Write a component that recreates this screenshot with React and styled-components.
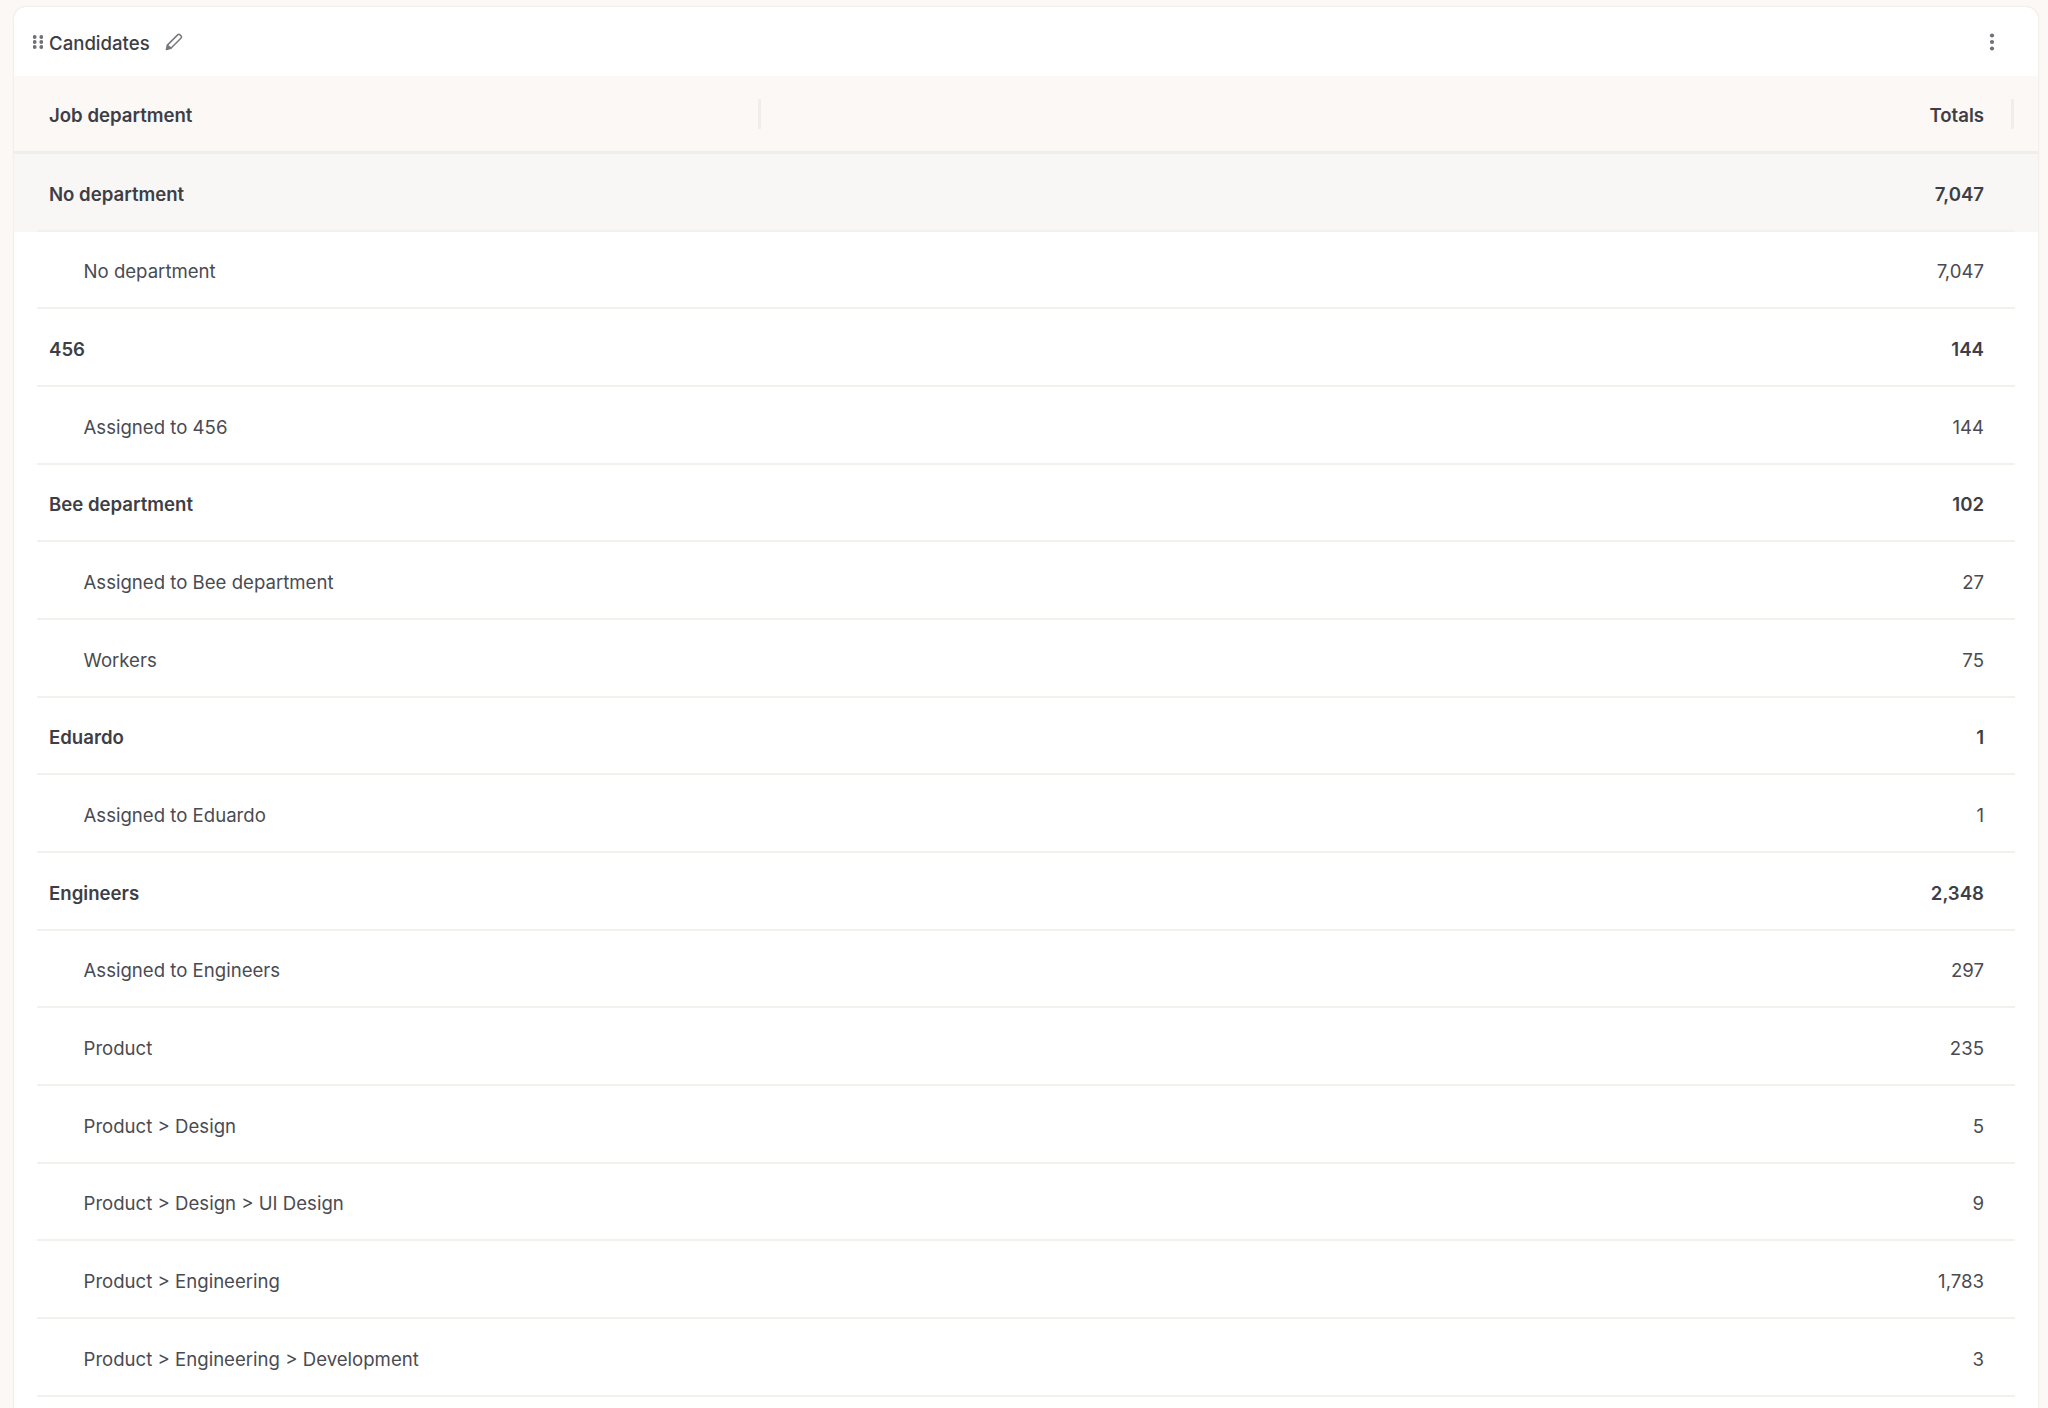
import React from 'react';
import styled, { createGlobalStyle } from 'styled-components';

const GlobalStyle = createGlobalStyle`
    html, body {
        margin: 0;
        height: 1408px;
        overflow: hidden;
        background: #fbf8f5;
    }
`;

const Page = styled.main`
    height: 1408px;
    padding: 7px 10px 0 14px;
    box-sizing: border-box;
    overflow: hidden;
    font-family: Inter, "Liberation Sans", sans-serif;
    font-size: 18.6px;
    color: #3d3e46;
`;

const Card = styled.section`
    background: #fff;
    border-radius: 12px 12px 0 0;
    height: 100%;
    overflow: hidden;
    box-shadow: 0 0 2px rgba(90, 70, 40, 0.18);
`;

const Toolbar = styled.header`
    display: flex;
    align-items: center;
    height: 69px;
    padding: 0 42px 0 19px;
`;

const Title = styled.h2`
    margin: 2px 15px 0 6px;
    font-size: inherit;
    font-weight: 500;
`;

const KebabButton = styled.button`
    display: flex;
    margin-left: auto;
    padding: 0;
    border: 0;
    background: none;
    color: #6f7076;
`;

const HeadRow = styled.div`
    display: grid;
    grid-template-columns: 712px 1fr 30px;
    align-items: center;
    height: 75px;
    padding: 0 24px 0 35px;
    background: #fbf8f5;
    border-bottom: 3px solid #f0eeea;
`;

const HeadCell = styled.div`
    display: flex;
    justify-content: ${(p) => (p.$right ? 'flex-end' : 'space-between')};
    align-items: center;
    font-weight: 560;
`;

const HeadLabel = styled.span`
    padding-top: 2px;
`;

const Divider = styled.span`
    width: 3px;
    height: 30px;
    background: #f1eeea;
`;

const Row = styled.div`
    padding: 0 23px;
    background: ${(p) => (p.$highlight ? '#f8f7f5' : 'transparent')};
`;

const RowInner = styled.div`
    display: flex;
    justify-content: space-between;
    align-items: center;
    box-sizing: border-box;
    height: 77.67px;
    padding: 4px 31px 0 ${(p) => (p.$child ? '46.5px' : '12px')};
    border-bottom: 2px solid #f2f1ec;
    font-weight: ${(p) => (p.$child ? 400 : 580)};
    color: ${(p) => (p.$child ? '#4a4b52' : '#3d3e46')};
`;

const rows = [
    ['No department', '7,047', false, true],
    ['No department', '7,047', true],
    ['456', '144'],
    ['Assigned to 456', '144', true],
    ['Bee department', '102'],
    ['Assigned to Bee department', '27', true],
    ['Workers', '75', true],
    ['Eduardo', '1'],
    ['Assigned to Eduardo', '1', true],
    ['Engineers', '2,348'],
    ['Assigned to Engineers', '297', true],
    ['Product', '235', true],
    ['Product > Design', '5', true],
    ['Product > Design > UI Design', '9', true],
    ['Product > Engineering', '1,783', true],
    ['Product > Engineering > Development', '3', true],
];

const DragIcon = () => (
    <svg width="10" height="14" viewBox="0 0 10 14" fill="#6f7076">
        {[2, 7, 12].map((y) => [1.7, 8.3].map((x) => (
            <circle key={`${x}-${y}`} cx={x} cy={y} r="1.9" />
        )))}
    </svg>
);

const PencilIcon = () => (
    <svg width="18" height="18" viewBox="0 0 18 18" fill="none" stroke="#77787d" strokeWidth="1.5" strokeLinejoin="round">
        <path d="M12.6 1.9a1.7 1.7 0 0 1 2.4 0l.9.9a1.7 1.7 0 0 1 0 2.4L6.4 14.7l-3.9-.6-.1-2z" />
        <path d="M1.4 16.5l1-4.2 3.6 3z" fill="#77787d" />
    </svg>
);

const KebabIcon = () => (
    <svg width="8" height="18" viewBox="0 0 8 18" fill="currentColor">
        <circle cx="4" cy="2.5" r="2.1" />
        <circle cx="4" cy="9" r="2.1" />
        <circle cx="4" cy="15.5" r="2.1" />
    </svg>
);

const App = () => (
    <Page>
        <GlobalStyle />
        <Card>
            <Toolbar>
                <DragIcon />
                <Title>Candidates</Title>
                <PencilIcon />
                <KebabButton><KebabIcon /></KebabButton>
            </Toolbar>
            <HeadRow>
                <HeadCell><HeadLabel>Job department</HeadLabel><Divider /></HeadCell>
                <HeadCell $right><HeadLabel>Totals</HeadLabel></HeadCell>
                <HeadCell $right><Divider /></HeadCell>
            </HeadRow>
            {rows.map(([label, total, child, highlight], i) => (
                <Row key={i} $highlight={highlight}>
                    <RowInner $child={child}>
                        <span>{label}</span>
                        <span>{total}</span>
                    </RowInner>
                </Row>
            ))}
        </Card>
    </Page>
);

export default App;
